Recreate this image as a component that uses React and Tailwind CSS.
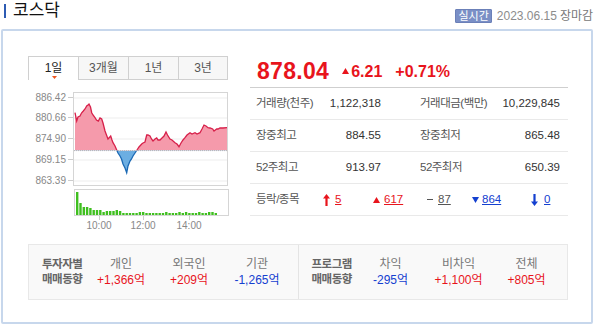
import React from "react";

const FONT = { fontFamily: '"Liberation Sans", "Noto Sans CJK KR", sans-serif' };

// price line, chart-box coordinates (box is 155 x 94)
const PTS = [
  [1, 19.7], [2.7, 28], [4, 24], [6, 23], [7.5, 20], [9.3, 18], [11, 16], [12.7, 13], [14, 12],
  [15, 11], [16.5, 14], [17.7, 19.7], [19, 22], [21, 24.7], [22.5, 27], [24.3, 28], [26, 25],
  [27.7, 26], [29, 30], [31, 38], [32.5, 42], [34, 46], [36.7, 43], [38, 47], [39, 49.7],
  [41, 53], [42.7, 57], [44, 60], [46, 63], [47.5, 66], [49, 71], [51, 75], [52.7, 79.7],
  [54, 73], [56, 68], [57.5, 66], [59, 63], [61, 60], [63, 57], [65, 54], [67.7, 51], [69, 50],
  [71, 49], [72.7, 42], [74, 42], [76, 43], [77.5, 46], [79, 48], [81, 46], [82.7, 45], [84, 47],
  [86, 47], [88, 45], [90, 43], [92, 39], [93.5, 42], [96, 46], [98, 47], [101, 49.7], [103, 51],
  [105, 53.7], [107, 50], [109, 47], [111, 44.7], [113, 42], [116, 39.7], [118, 41], [121, 39.7],
  [123, 41], [126, 39.7], [128, 36], [130, 32], [132, 33], [134, 34.7], [136, 35], [138.7, 36],
  [140, 38], [142.7, 36], [144, 36], [146, 35], [149, 35], [153, 34.7],
];
const BASE = 57.6;

const VOLS = [23, 12, 8, 8, 7, 5, 5, 5, 3, 4, 4, 4, 5, 4, 2, 2, 2, 2, 2, 3, 3, 2, 2, 2, 2, 2, 2, 3, 2, 2, 2, 3, 2, 3, 2, 2, 2, 3, 2, 2, 3, 3, 2];

function PriceChart() {
  const line = PTS.map((p, i) => `${i ? "L" : "M"}${p[0]},${p[1]}`).join(" ");
  const area = `${line} L${PTS[PTS.length - 1][0]},${BASE} L${PTS[0][0]},${BASE} Z`;
  return (
    <svg width="153" height="92" viewBox="0 0 153 92" className="block">
      <defs>
        <clipPath id="up">
          <rect x="0" y="0" width="153" height={BASE} />
        </clipPath>
        <clipPath id="down">
          <rect x="0" y={BASE} width="153" height={92 - BASE} />
        </clipPath>
      </defs>
      {[5, 25, 46, 67, 88].map((y) => (
        <line key={y} x1="0" x2="153" y1={y} y2={y} stroke="#ededed" strokeWidth="1" />
      ))}
      <path d={area} fill="#f59aab" clipPath="url(#up)" />
      <path d={area} fill="#6caee2" clipPath="url(#down)" />
      <path d={line} fill="none" stroke="#d7204a" strokeWidth="1.3" clipPath="url(#up)" />
      <path d={line} fill="none" stroke="#1b69b4" strokeWidth="1.3" clipPath="url(#down)" />
      <line x1="0" x2="153" y1={BASE} y2={BASE} stroke="#b5b5b5" strokeWidth="1" strokeDasharray="1 1" />
    </svg>
  );
}

function VolumeChart() {
  return (
    <svg width="153" height="25" viewBox="0 0 153 25" className="block">
      {VOLS.map((h, i) => (
        <rect key={i} x={1 + i * 3.3} y={25 - h} width="2.4" height={h} fill="#3fbf1f" />
      ))}
    </svg>
  );
}

function UpArrow({ color }) {
  return (
    <svg width="7" height="12" viewBox="0 0 7 12">
      <path d="M3.5 0 L7 4.5 L4.6 4.5 L4.6 12 L2.4 12 L2.4 4.5 L0 4.5 Z" fill={color} />
    </svg>
  );
}

function DownArrow({ color }) {
  return (
    <svg width="7" height="12" viewBox="0 0 7 12">
      <path d="M3.5 12 L7 7.5 L4.6 7.5 L4.6 0 L2.4 0 L2.4 7.5 L0 7.5 Z" fill={color} />
    </svg>
  );
}

function Tri({ color, down, w = 7, h = 6 }) {
  return (
    <svg width={w} height={h} viewBox={`0 0 ${w} ${h}`} className="block">
      <path d={down ? `M0 0 L${w} 0 L${w / 2} ${h} Z` : `M0 ${h} L${w} ${h} L${w / 2} 0 Z`} fill={color} />
    </svg>
  );
}

function StatRow({ l1, v1, l2, v2 }) {
  return (
    <div className="flex items-center h-[32px] border-b border-[#e9e9e9] text-[11.5px]">
      <div className="flex w-[131px] pl-[6px] items-center">
        <span className="text-[#555] tracking-[-0.5px]">{l1}</span>
        <span className="ml-auto text-[#333]">{v1}</span>
      </div>
      <div className="flex w-[140px] ml-[39px] items-center">
        <span className="text-[#555] tracking-[-0.5px]">{l2}</span>
        <span className="ml-auto text-[#333]">{v2}</span>
      </div>
    </div>
  );
}

function Flow({ title, items }) {
  return (
    <div className="flex flex-1 items-center pl-[13px]">
      <div className="w-[45px] text-[11.5px] font-bold text-[#666] leading-[15px] tracking-[-0.5px]">
        {title.map((t) => (
          <div key={t}>{t}</div>
        ))}
      </div>
      {items.map((it) => (
        <div key={it.name} className="w-[68px] text-center text-[12px] leading-[16px]">
          <div className="text-[#777]">{it.name}</div>
          <div className={it.up ? "text-[#e8141c]" : "text-[#1440d0]"}>{it.value}</div>
        </div>
      ))}
    </div>
  );
}

export default function App() {
  const tabs = ["1일", "3개월", "1년", "3년"];
  const yLabels = ["886.42", "880.66", "874.90", "869.15", "863.39"];

  return (
    <div className="w-[595px] h-[327px] bg-white overflow-hidden" style={FONT}>
      {/* Header */}
      <div className="flex h-[29px] pl-[4px] pr-[2px]">
        <div className="flex items-start pt-[4px]">
          <div className="w-[2px] h-[14px] bg-[#2d5bb3]" />
          <span className="ml-[7px] text-[17px] leading-[14px] text-[#111]">코스닥</span>
        </div>
        <div className="ml-auto flex items-center h-[15px] mt-[8px]">
          <span className="px-[2px] h-[14px] leading-[13px] text-[11px] text-white bg-[#7a8fc6] border border-[#6b80b8] rounded-[1px]">
            실시간
          </span>
          <span className="ml-[5px] text-[12px] text-[#8c8c8c]">2023.06.15</span>
          <span className="ml-[3px] text-[12px] text-[#777]">장마감</span>
        </div>
      </div>

      {/* Box */}
      <div className="ml-[1px] w-[592px] h-[295px] border-2 border-[#c7d7ec] rounded-[2px] pt-[25px] pl-[25px]">
        <div className="flex h-[176px]">
          {/* left: chart */}
          <div className="w-[200px]">
            <div className="flex h-[24px] text-[12px]">
              {tabs.map((t, i) =>
                i === 0 ? (
                  <div key={t} className="relative w-[50px] border-t border-l border-[#d0d0d0] bg-white flex items-center justify-center text-[#222] pb-[2px]">
                    {t}
                    <div className="absolute left-[23px] bottom-[1px]">
                      <Tri color="#f0571f" down w={5} h={3} />
                    </div>
                  </div>
                ) : (
                  <div key={t} className="w-[50px] border-t border-l border-b border-[#d0d0d0] bg-[#f7f7f7] flex items-center justify-center text-[#555] last:border-r">
                    {t}
                  </div>
                )
              )}
            </div>

            <div className="flex mt-[12px]">
              <div className="relative w-[46px] h-[94px]">
                {yLabels.map((l, i) => (
                  <div
                    key={l}
                    className="absolute right-0 flex items-center h-[12px] text-[10px] text-[#888]"
                    style={{ top: [5, 25, 46, 67, 88][i] - 6 }}
                  >
                    <span>{l}</span>
                    <span className="ml-[2px] w-[5px] h-px bg-[#ccc]" />
                  </div>
                ))}
              </div>
              <div className="w-[155px] h-[94px] border border-[#d5d5d5]">
                <PriceChart />
              </div>
            </div>

            <div className="ml-[46px] mt-[3px] w-[155px] h-[27px] border border-[#d5d5d5]">
              <VolumeChart />
            </div>
            <div className="relative ml-[46px] h-[16px] text-[10px] text-[#888]">
              {[
                ["10:00", 25],
                ["12:00", 69],
                ["14:00", 115],
              ].map(([t, x]) => (
                <div key={t} className="absolute top-0 flex flex-col items-center w-[30px]" style={{ left: x - 15 }}>
                  <span className="w-px h-[4px] bg-[#ccc]" />
                  <span className="leading-[12px]">{t}</span>
                </div>
              ))}
            </div>
          </div>

          {/* right: quote */}
          <div className="ml-[22px] w-[318px]">
            <div className="flex items-center h-[32px] border-b border-[#cfcfcf] pl-[7px] text-[#e8141c] font-bold">
              <span className="text-[23px] leading-none tracking-[0.3px]">878.04</span>
              <span className="ml-[13px] mb-[2px]">
                <Tri color="#e8141c" />
              </span>
              <span className="ml-[2px] text-[16px]">6.21</span>
              <span className="ml-[13px] text-[16px]">+0.71%</span>
            </div>
            <StatRow l1="거래량(천주)" v1="1,122,318" l2="거래대금(백만)" v2="10,229,845" />
            <StatRow l1="장중최고" v1="884.55" l2="장중최저" v2="865.48" />
            <StatRow l1="52주최고" v1="913.97" l2="52주최저" v2="650.39" />
            <div className="flex items-center h-[32px] border-b border-[#e9e9e9] text-[11.5px]">
              <span className="w-[73px] pl-[6px] text-[#555] tracking-[-0.5px]">등락/종목</span>
              <span className="flex items-center w-[50px]">
                <UpArrow color="#e8141c" />
                <span className="ml-[5px] underline text-[#e8141c]">5</span>
              </span>
              <span className="flex items-center w-[54px]">
                <Tri color="#e8141c" />
                <span className="ml-[4px] underline text-[#e8141c]">617</span>
              </span>
              <span className="flex items-center w-[45px]">
                <span className="w-[6px] h-[1.5px] bg-[#555]" />
                <span className="ml-[5px] underline text-[#555]">87</span>
              </span>
              <span className="flex items-center w-[59px]">
                <Tri color="#1440d0" down />
                <span className="ml-[3px] underline text-[#1440d0]">864</span>
              </span>
              <span className="flex items-center">
                <DownArrow color="#1440d0" />
                <span className="ml-[6px] underline text-[#1440d0]">0</span>
              </span>
            </div>
          </div>
        </div>

        {/* investor flow */}
        <div className="mt-[12px] flex w-[540px] h-[56px] bg-[#f9f9f9] border border-[#e8e8e8]">
          <Flow
            title={["투자자별", "매매동향"]}
            items={[
              { name: "개인", value: "+1,366억", up: true },
              { name: "외국인", value: "+209억", up: true },
              { name: "기관", value: "-1,265억", up: false },
            ]}
          />
          <div className="w-px bg-[#e4e4e4]" />
          <Flow
            title={["프로그램", "매매동향"]}
            items={[
              { name: "차익", value: "-295억", up: false },
              { name: "비차익", value: "+1,100억", up: true },
              { name: "전체", value: "+805억", up: true },
            ]}
          />
        </div>
      </div>
    </div>
  );
}
